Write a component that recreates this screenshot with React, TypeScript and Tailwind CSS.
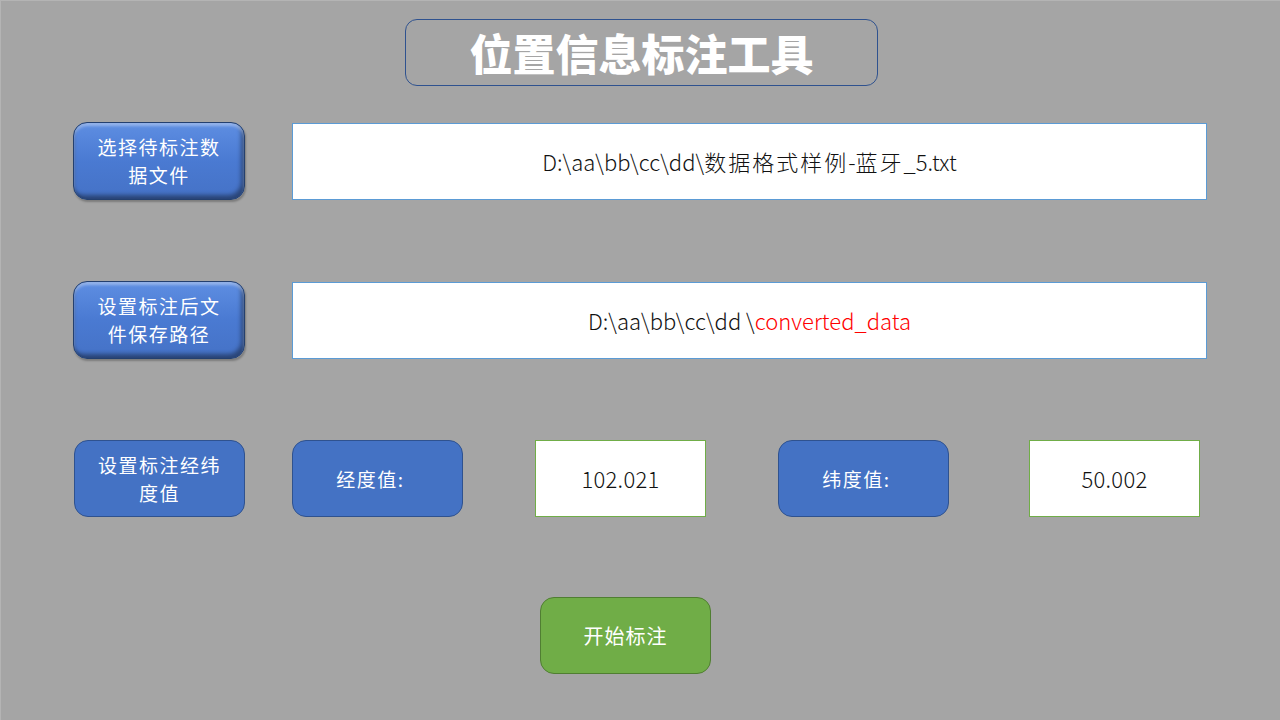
import React from "react";

const font = { fontFamily: '"Noto Sans CJK SC", "Noto Sans", sans-serif' };

function BevelButton({ children }: { children: React.ReactNode }) {
  return (
    <div
      className="w-[172px] h-[78px] shrink-0 rounded-[14px] flex items-center justify-center text-center text-white text-[19px] tracking-[1.5px] leading-[28px] px-2 border border-[#24406f] bg-gradient-to-b from-[#5e8ee2] via-[#4a7ad2] to-[#4572c6] shadow-[inset_0_3px_3px_rgba(255,255,255,0.35),inset_-3px_-4px_4px_rgba(0,0,0,0.4),inset_2px_0_2px_rgba(0,0,0,0.1),1px_2px_2px_rgba(0,0,0,0.25)]"
    >
      {children}
    </div>
  );
}

function FlatButton({ children, className = "" }: { children: React.ReactNode; className?: string }) {
  return (
    <div
      className={`w-[171px] h-[77px] shrink-0 rounded-[14px] flex items-center justify-center text-center text-white text-[19px] tracking-[1.5px] leading-[28px] px-2 bg-[#4472c4] border border-[#2f528f] ${className}`}
    >
      {children}
    </div>
  );
}

function ValueBox({ children, className = "" }: { children: React.ReactNode; className?: string }) {
  return (
    <div
      className={`w-[171px] h-[77px] shrink-0 flex items-center justify-center bg-white border border-[#70ad47] text-[22px] font-light tracking-[0.3px] text-[#111] ${className}`}
    >
      {children}
    </div>
  );
}

export default function App() {
  return (
    <div
      className="w-[1280px] h-[720px] bg-[#a5a5a5] border-l border-t border-[#b4b4b4] flex flex-col overflow-hidden"
      style={font}
    >
      <div className="mt-[18px] ml-[404px] w-[473px] h-[67px] rounded-[12px] border border-[#2f528f] flex items-center justify-center">
        <span className="text-white font-black text-[43px] leading-none">
          位置信息标注工具
        </span>
      </div>

      <div className="mt-[36px] ml-[72px] flex items-center">
        <BevelButton>
          选择待标注数
          <br />
          据文件
        </BevelButton>
        <div className="ml-[47px] w-[915px] h-[77px] bg-white border border-[#5b9bd5] flex items-center justify-center text-[22px] font-light text-[#111]">
          D:\aa\bb\cc\dd\<span className="tracking-[2px]">数据格式样例</span>-<span className="tracking-[2px]">蓝牙</span>_5.txt
        </div>
      </div>

      <div className="mt-[81px] ml-[72px] flex items-center">
        <BevelButton>
          设置标注后文
          <br />
          件保存路径
        </BevelButton>
        <div className="ml-[47px] w-[915px] h-[77px] bg-white border border-[#5b9bd5] flex items-center justify-center text-[22px] font-light text-[#111]">
          D:\aa\bb\cc\dd \<span className="text-[#ff0000]">converted_data</span>
        </div>
      </div>

      <div className="mt-[81px] ml-[73px] flex items-center">
        <FlatButton>
          设置标注经纬
          <br />
          度值
        </FlatButton>
        <FlatButton className="ml-[47px]">
          <span className="mr-[14px]">经度值:</span>
        </FlatButton>
        <ValueBox className="ml-[72px]">102.021</ValueBox>
        <FlatButton className="ml-[72px]">
          <span className="mr-[14px]">纬度值:</span>
        </FlatButton>
        <ValueBox className="ml-[80px]">50.002</ValueBox>
      </div>

      <div className="mt-[80px] ml-[539px] flex">
        <div className="w-[171px] h-[77px] rounded-[14px] bg-[#70ad47] border border-[#507e32] flex items-center justify-center text-white text-[20px] tracking-[1px]">
          开始标注
        </div>
      </div>
    </div>
  );
}
